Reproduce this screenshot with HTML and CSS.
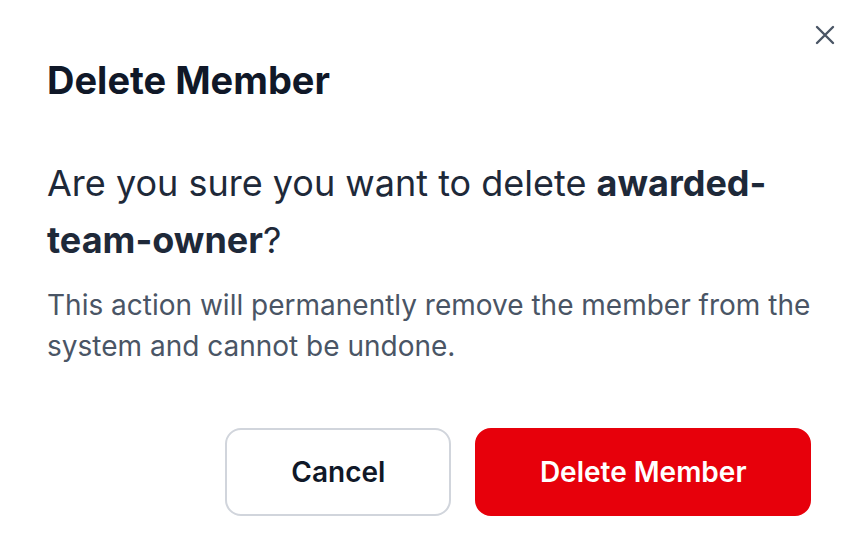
FILE: index.html
```html
<!DOCTYPE html>
<html>
<head>
<meta charset="utf-8">
<link rel="stylesheet" href="styles.css">
</head>
<body>
<div class="dialog">
  <button class="close" aria-label="Close">
    <svg width="22" height="22" viewBox="0 0 22 22"><path d="M3 3L19 19M19 3L3 19" stroke="#4a5565" stroke-width="2.4" stroke-linecap="round" fill="none"/></svg>
  </button>
  <h2 class="title">Delete Member</h2>
  <p class="question">Are you sure you want to delete <strong>awarded-team-owner</strong>?</p>
  <p class="desc">This action will permanently remove the member from the system and cannot be undone.</p>
  <div class="actions">
    <button class="btn cancel">Cancel</button>
    <button class="btn danger">Delete Member</button>
  </div>
</div>
</body>
</html>
```
FILE: styles.css
```css
html, body {
  margin: 0;
  padding: 0;
  background: #ffffff;
}
body {
  font-family: Inter, "Noto Sans", sans-serif;
}
.dialog {
  position: relative;
  width: 862px;
  height: 554px;
  box-sizing: border-box;
  padding: 57px 50px 0 47px;
}
.close {
  position: absolute;
  top: 24px;
  right: 26px;
  border: 0;
  background: none;
  padding: 0;
  width: 22px;
  height: 22px;
  display: flex;
  cursor: pointer;
}
.title {
  margin: 0;
  font-size: 38px;
  line-height: 46px;
  font-weight: 700;
  color: #101828;
}
.question {
  margin: 52px 0 0;
  font-size: 36px;
  line-height: 57px;
  font-weight: 400;
  color: #1e2939;
}
.question strong {
  font-weight: 700;
}
.desc {
  margin: 16px 0 0;
  font-size: 28px;
  line-height: 41px;
  color: #4a5565;
}
.actions {
  display: flex;
  justify-content: flex-end;
  gap: 24px;
  margin: 61px 1px 0 0;
}
.btn {
  height: 88px;
  box-sizing: border-box;
  border-radius: 16px;
  font-family: inherit;
  font-size: 28px;
  font-weight: 600;
}
.cancel {
  background: #ffffff;
  border: 2px solid #d1d5dc;
  color: #101828;
  padding: 0 64px;
}
.danger {
  background: #e7000b;
  border: 2px solid #e7000b;
  color: #ffffff;
  padding: 0 62.5px;
}
```
